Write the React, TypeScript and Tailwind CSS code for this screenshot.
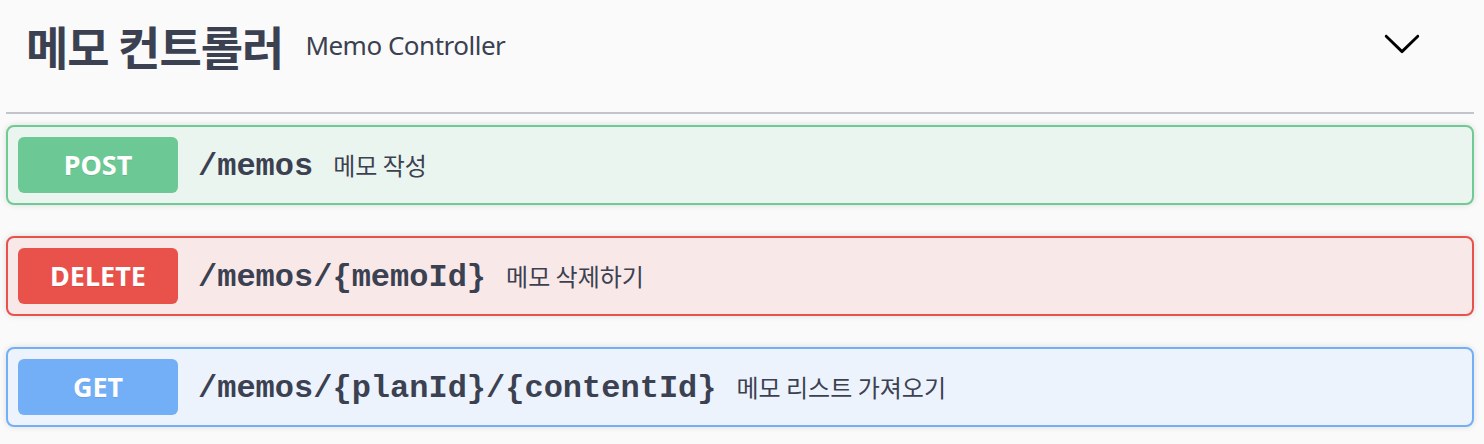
import React from "react";

const ops = [
  {
    method: "POST",
    path: "/memos",
    desc: "메모 작성",
    badge: "bg-[#6cc995]",
    block: "bg-[#ebf5ef] border-[#6fcb94]",
  },
  {
    method: "DELETE",
    path: "/memos/{memoId}",
    desc: "메모 삭제하기",
    badge: "bg-[#e9514b]",
    block: "bg-[#f9e8e8] border-[#e9514b]",
  },
  {
    method: "GET",
    path: "/memos/{planId}/{contentId}",
    desc: "메모 리스트 가져오기",
    badge: "bg-[#73aff7]",
    block: "bg-[#ecf3fc] border-[#73aff7]",
  },
];

export default function App() {
  return (
    <div className="w-[1484px] h-[444px] bg-[#fafafa] overflow-hidden text-[#3b4151]">
      <div className="ml-[6px] w-[1468px] h-[114px] border-b-2 border-[#c3c5ca] pb-[22px] flex items-center pl-[20px]">
        <h3
          className="text-[46px] font-bold tracking-[-1px] leading-none"
          style={{ fontFamily: '"Noto Sans CJK KR", "Noto Sans", sans-serif' }}
        >
          메모 컨트롤러
        </h3>
        <span
          className="ml-[22px] text-[26px] tracking-[-0.5px] leading-none"
          style={{ fontFamily: '"Noto Sans", "Noto Sans CJK KR", sans-serif' }}
        >
          Memo Controller
        </span>
        <svg
          className="ml-auto mr-[52px] mb-[4px]"
          width="40"
          height="40"
          viewBox="0 0 20 20"
        >
          <path
            fill="#000"
            d="M17.418 6.109c.272-.268.709-.268.979 0s.271.701 0 .969l-7.908 7.83c-.27.268-.707.268-.979 0l-7.908-7.83c-.27-.268-.27-.701 0-.969.271-.268.709-.268.979 0L10 13.25l7.418-7.141z"
          />
        </svg>
      </div>
      <div className="mt-[11px] ml-[6px] w-[1468px] flex flex-col gap-[31px]">
        {ops.map((op) => (
          <div
            key={op.method}
            className={`h-[80px] border-2 rounded-[8px] p-[10px] flex items-center shadow-[0_0_6px_rgba(0,0,0,0.12)] ${op.block}`}
          >
            <div
              className={`w-[160px] h-[56px] rounded-[6px] flex items-center justify-center text-white font-bold text-[27px] ${op.badge}`}
              style={{
                fontFamily: '"Noto Sans", sans-serif',
                textShadow: "0 1px 0 rgba(0,0,0,0.1)",
              }}
            >
              {op.method}
            </div>
            <span
              className="px-[20px] pt-[4px] text-[32px] font-bold leading-none"
              style={{ fontFamily: '"Liberation Mono", "Courier New", monospace' }}
            >
              {op.path}
            </span>
            <span
              className="text-[24px] leading-none"
              style={{ fontFamily: '"Noto Sans CJK KR", "Noto Sans", sans-serif' }}
            >
              {op.desc}
            </span>
          </div>
        ))}
      </div>
    </div>
  );
}
